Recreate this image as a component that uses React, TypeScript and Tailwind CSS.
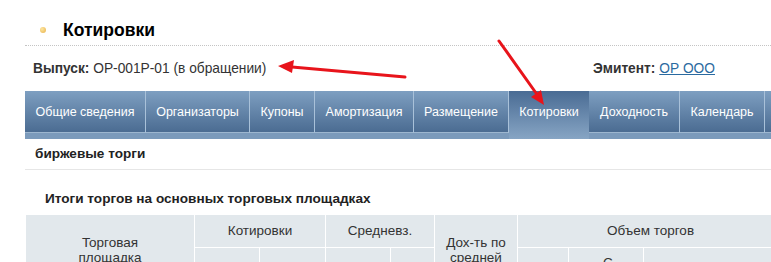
import React from 'react';

const tabs = [
  { label: 'Общие сведения', w: 'w-[121px]' },
  { label: 'Организаторы', w: 'w-[104px]' },
  { label: 'Купоны', w: 'w-[65px]' },
  { label: 'Амортизация', w: 'w-[99px]' },
  { label: 'Размещение', w: 'w-[95px]' },
  { label: 'Котировки', w: 'w-[80px]', active: true },
  { label: 'Доходность', w: 'w-[91px]' },
  { label: 'Календарь', w: 'w-[85px]' },
  { label: 'Рейтинги', w: 'w-[80px]' },
];

export default function App() {
  return (
    <div className="relative h-[262px] w-full overflow-hidden bg-white font-['Liberation_Sans',Arial,sans-serif] text-[#333]">
      <div className="pl-[25px]">
        {/* Title */}
        <div className="flex items-center h-[24px] mt-[18px] pl-[15px]">
          <span className="w-[6px] h-[6px] rounded-full bg-[radial-gradient(circle_at_35%_35%,#fde6a0,#e8b048)]"></span>
          <h1 className="ml-[17px] text-[17.5px] font-bold text-black leading-[24px]">Котировки</h1>
        </div>
        <div className="mt-[3px] border-b border-dotted border-[#c4c4c4]"></div>

        {/* Issue info */}
        <div className="flex justify-between items-center h-[16px] mt-[15px] pl-[8px] pr-[56px] text-[13.75px]">
          <div>
            <span className="font-bold">Выпуск:</span> ОР-001Р-01 (в обращении)
          </div>
          <div>
            <span className="font-bold">Эмитент:</span>{' '}
            <a href="#" className="text-[#2a6aa0] underline">ОР ООО</a>
          </div>
        </div>

        {/* Tabs */}
        <div className="flex items-start mt-[14px] h-[48px] w-[900px] bg-[#7b9abb]">
          {tabs.map((t) => (
            <div
              key={t.label}
              className={`${t.w} shrink-0 flex items-start justify-center text-white text-[12.5px] ${
                t.active
                  ? 'h-[48px] pt-[12px] bg-linear-to-b from-[#4a6c94] to-[#87a5c4]'
                  : 'h-[42px] pt-[12px] border-r border-[#a9c1d9] border-b border-b-[#9db6cf] bg-linear-to-b from-[#7e9fc1] to-[#4b6c92]'
              }`}
            >
              {t.label}
            </div>
          ))}
        </div>

        {/* Subheader */}
        <div className="h-[31px] flex items-center pl-[10px] border-b border-[#e6e6e6] text-[13.6px] font-bold text-[#222]">
          биржевые торги
        </div>

        <div className="mt-[21px] pl-[20px] text-[13.6px] font-bold text-[#222] leading-[16px]">
          Итоги торгов на основных торговых площадках
        </div>

        {/* Table */}
        <table className="mt-[7px] table-fixed border-collapse text-[13.5px] text-[#333] w-[758px]">
          <colgroup>
            <col className="w-[169px]" />
            <col className="w-[65px]" />
            <col className="w-[66px]" />
            <col className="w-[65px]" />
            <col className="w-[44px]" />
            <col className="w-[83px]" />
            <col className="w-[51px]" />
            <col className="w-[75px]" />
            <col className="w-[140px]" />
          </colgroup>
          <thead>
            <tr className="h-[33px]">
              <th rowSpan={2} className="bg-[#e2e8ec] border border-white font-normal leading-[15px] text-center">
                Торговая<br />площадка
              </th>
              <th colSpan={2} className="bg-[#e2e8ec] border border-white font-normal">Котировки</th>
              <th colSpan={2} className="bg-[#e2e8ec] border border-white font-normal">Средневз.</th>
              <th rowSpan={2} className="bg-[#e2e8ec] border border-white font-normal leading-[15px]">
                Дох-ть по<br />средней
              </th>
              <th colSpan={3} className="bg-[#e2e8ec] border border-white font-normal">Объем торгов</th>
            </tr>
            <tr className="h-[28px]">
              <th className="bg-[#e2e8ec] border border-white font-normal"></th>
              <th className="bg-[#e2e8ec] border border-white font-normal"></th>
              <th className="bg-[#e2e8ec] border border-white font-normal"></th>
              <th className="bg-[#e2e8ec] border border-white font-normal"></th>
              <th className="bg-[#e2e8ec] border border-white font-normal"></th>
              <th className="bg-[#e2e8ec] border border-white font-normal align-top text-left pt-[7px] pl-[34px] leading-[15px]">
                С<br />НКД
              </th>
              <th className="bg-[#e2e8ec] border border-white font-normal"></th>
            </tr>
          </thead>
        </table>
      </div>

      {/* Red annotation arrows */}
      <svg className="absolute left-0 top-0 pointer-events-none" width="771" height="262" viewBox="0 0 771 262">
        <line x1="405" y1="77" x2="292" y2="67" stroke="#e8141b" strokeWidth="3" strokeLinecap="round" />
        <polygon points="278,66 294,60 292,73" fill="#e8141b" />
        <line x1="499" y1="41" x2="536" y2="93" stroke="#e8141b" strokeWidth="3" strokeLinecap="round" />
        <polygon points="544,105 531,97 541,90" fill="#e8141b" />
      </svg>
    </div>
  );
}
